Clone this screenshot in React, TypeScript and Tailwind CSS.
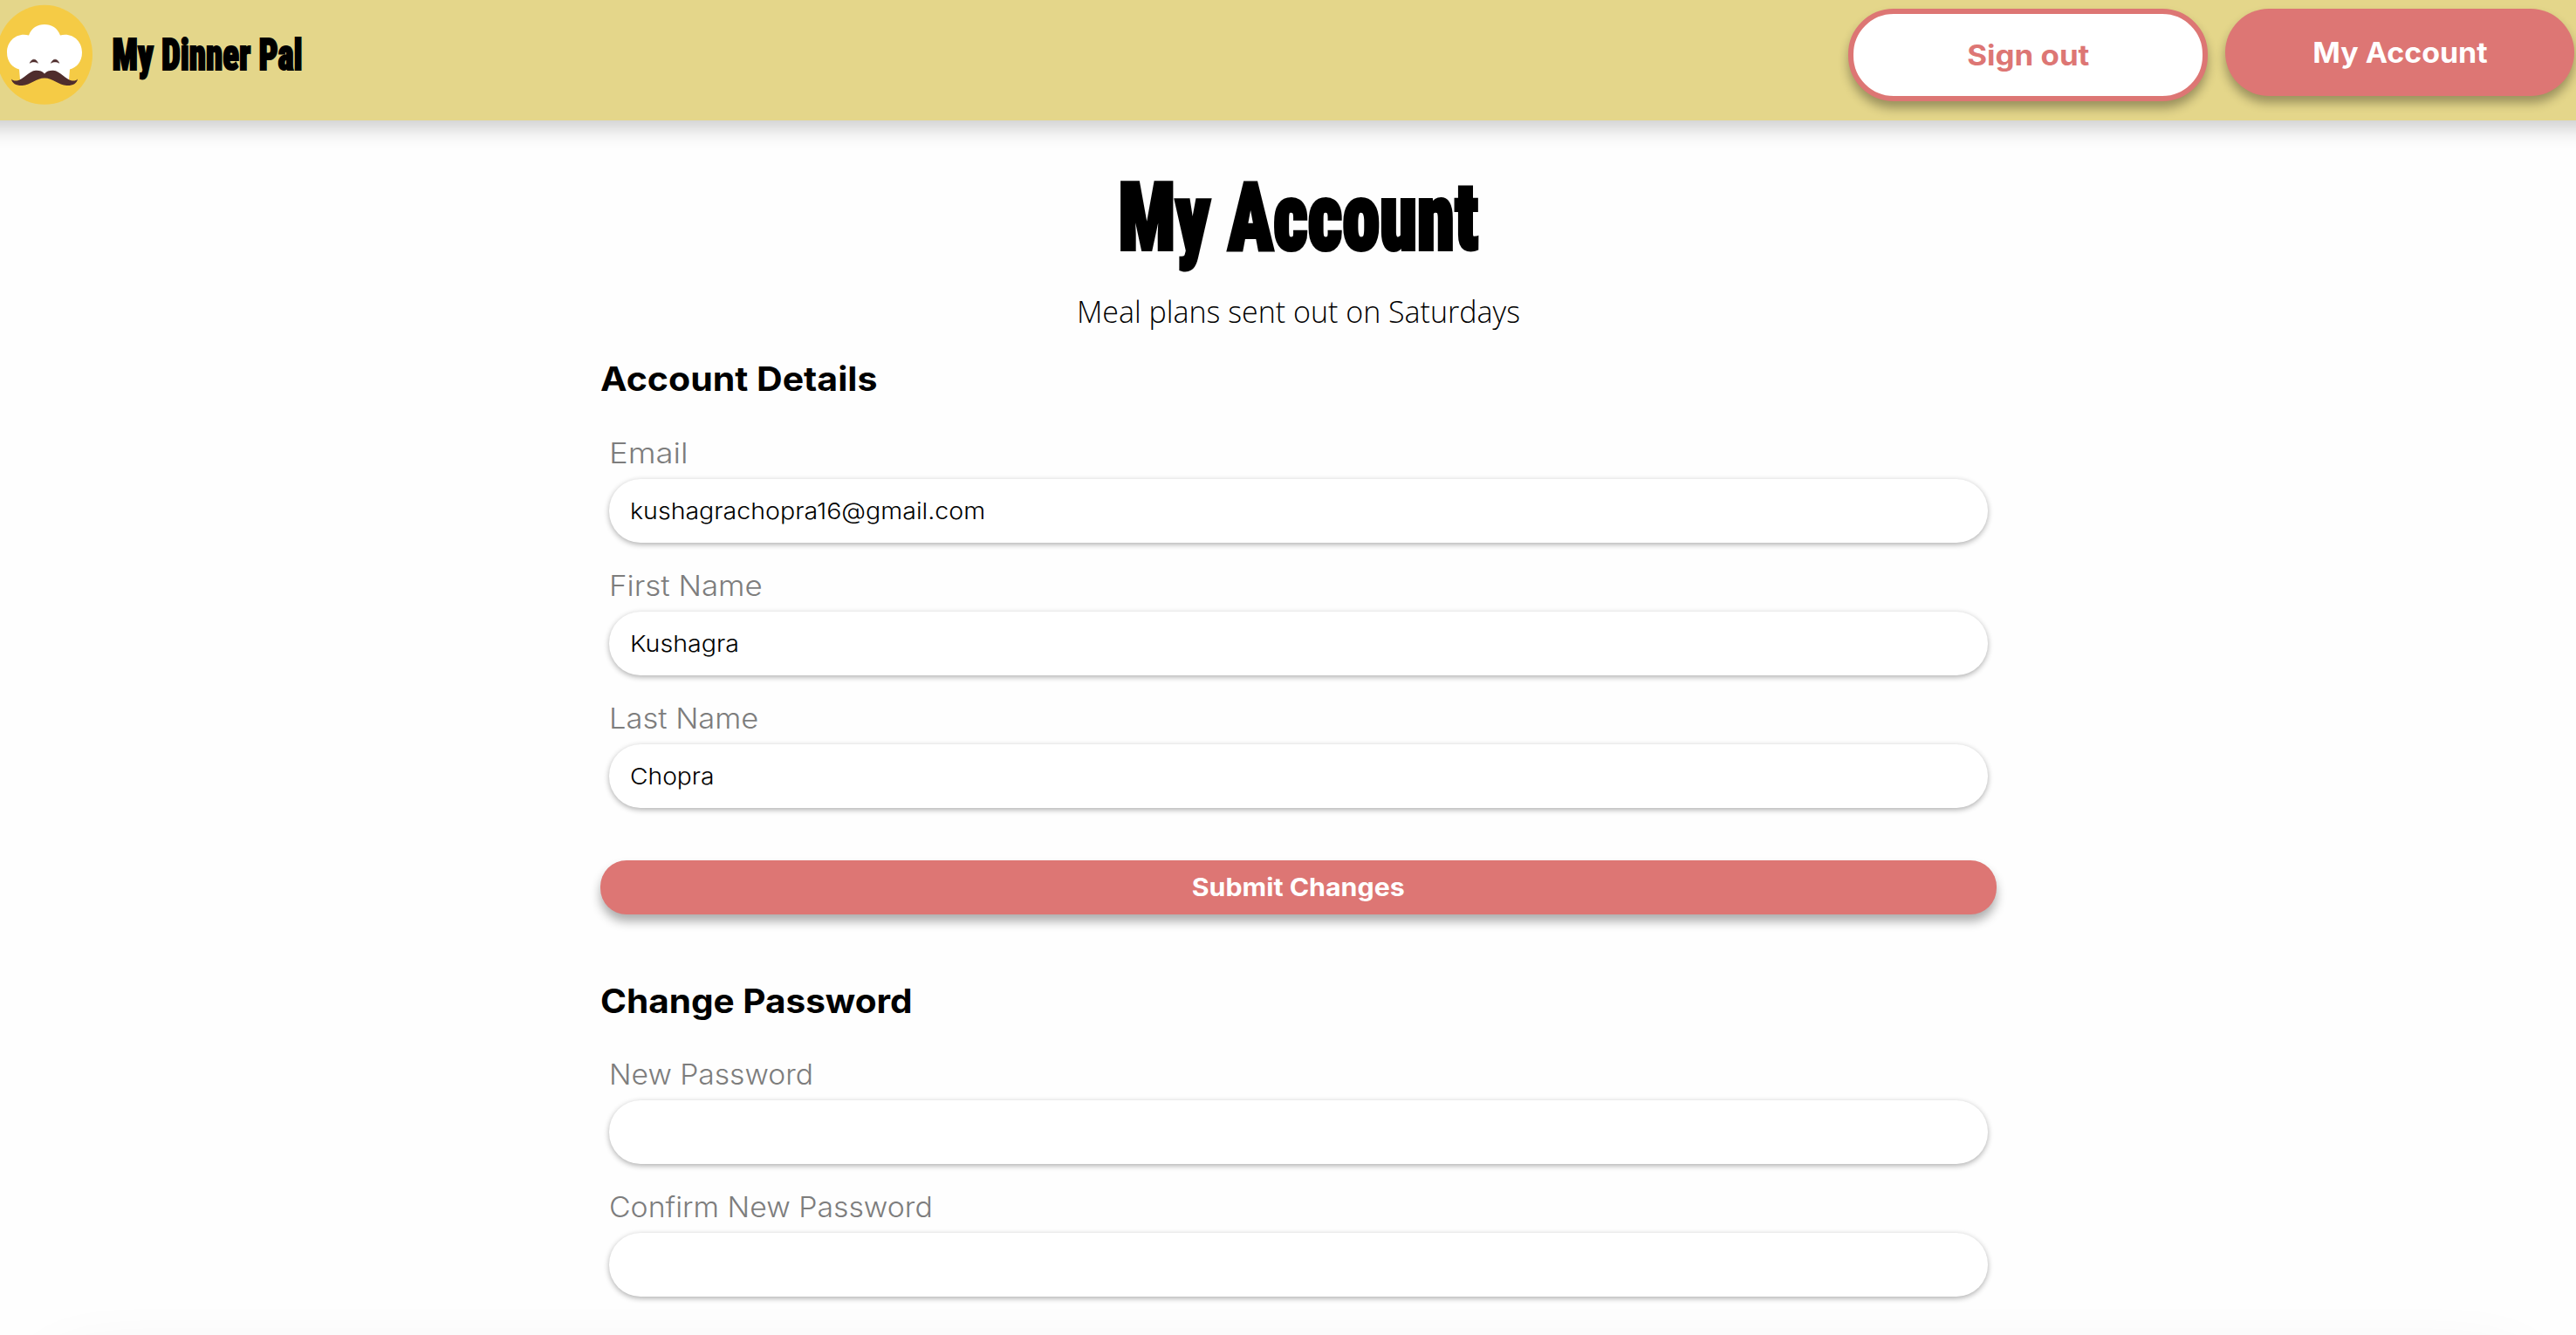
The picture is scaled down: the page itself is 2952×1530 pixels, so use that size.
import React from "react";

function ChefLogo() {
  return (
    <svg viewBox="0 0 110 130" className="h-[130px] w-[110px] shrink-0" aria-label="Chef logo">
      <ellipse cx="51" cy="62.8" rx="55" ry="57" fill="#f5cb45" />
      <path
        d="M33 40.5C36 32 43 28 51 28C59 28 66 32 69 40.5C83 37 94 47 94 60C94 71 88 77 80 79.5L79 91.5L51 89L23 91.5L22 79.5C14 77 8 71 8 60C8 47 19 37 33 40.5Z"
        fill="#fff"
      />
      <path
        d="M34.2 72.3C35.5 69.3 37 68.2 38.8 68.2C40.8 68.2 42.3 69.3 43.4 72.3C42 71.3 40.5 70.9 38.8 70.9C37 70.9 35.5 71.3 34.2 72.3ZM58.5 72.3C59.8 69.3 61.3 68.2 63.1 68.2C65.1 68.2 66.6 69.3 67.7 72.3C66.3 71.3 64.8 70.9 63.1 70.9C61.3 70.9 59.8 71.3 58.5 72.3Z"
        fill="#4f2d2d"
        stroke="#4f2d2d"
        strokeWidth="0.6"
      />
      <path
        d="M51 84.5C48.5 81.5 45 80.6 41 80.8C33 81.3 26.500 91.500 19.500 92.500C16.500 92.900 14.500 92.200 13 90.500C13.700 95.800 19 98.300 25.500 98C35 97.500 42 89.500 51 89.600C60 89.500 67 97.500 76.500 98C83 98.300 88.300 95.800 89 90.500C87.500 92.200 85.500 92.900 82.500 92.500C75.500 91.500 69 81.300 61 80.800C57 80.600 53.500 81.500 51 84.500Z"
        fill="#4f2d2d"
      />
    </svg>
  );
}

type FieldProps = { label: string; labelScale: string; value?: string; valueScale?: string };

function Field({ label, labelScale, value = "", valueScale = "" }: FieldProps) {
  return (
    <div>
      <label className="block pl-[10px] text-[32px] font-light leading-[40px] text-[#7d7d7d]">
        <span className={`inline-block origin-left ${labelScale}`}>{label}</span>
      </label>
      <div className="mx-[10px] mt-[9px] flex h-[73px] items-center rounded-[36px] bg-white pl-[24px] text-[26px] font-light shadow-[0_2px_6px_rgba(0,0,0,0.32)]">
        <span className={`origin-left ${valueScale}`}>{value}</span>
      </div>
    </div>
  );
}

export default function App() {
  return (
    <div className="h-screen overflow-hidden bg-[#fefefe] font-['Inter',sans-serif] text-black">
      <header className="-mx-10 flex h-[138px] items-start justify-between bg-[#e4d68a] px-10 shadow-[0_0_22px_9px_rgba(0,0,0,0.2)]">
        <div className="flex items-start">
          <ChefLogo />
          <span className="origin-left scale-x-[0.776] pl-[24px] pt-[33px] font-['Roboto',sans-serif] text-[50px] font-black leading-[60px] [font-stretch:75%] [-webkit-text-stroke:2px_#000]">
            My Dinner Pal
          </span>
        </div>
        <div className="flex items-start gap-[20px] pr-[2px] pt-[10px] text-[32px] font-bold">
          <button className="flex h-[106px] w-[412px] items-center justify-center rounded-[52px] border-[6px] border-[#dd7674] bg-white pt-px text-[#dd7674] shadow-[0_8px_12px_rgba(0,0,0,0.32)]">
            <span className="scale-x-[1.09]">Sign out</span>
          </button>
          <button className="flex h-[100px] w-[400px] items-center justify-center rounded-[50px] bg-[#dd7674] pt-px text-white shadow-[0_8px_12px_rgba(0,0,0,0.32)]">
            <span className="scale-x-[1.06]">My Account</span>
          </button>
        </div>
      </header>

      <main className="ml-[688px] w-[1600px] pt-[45px]">
        <h1 className="flex justify-center font-['Roboto',sans-serif] text-[108px] font-black leading-[132px] [font-stretch:75%] [-webkit-text-stroke:4px_#000]">
          <span className="scale-x-[0.8]">My Account</span>
        </h1>
        <p className="mt-[19px] text-center font-['Open_Sans',sans-serif] text-[34px] font-light leading-[46px]">
          Meal plans sent out on Saturdays
        </p>

        <section className="mt-[30px]">
          <h2 className="mb-[42px] text-[38px] font-bold leading-[48px]">
            <span className="inline-block origin-left scale-x-[1.08]">Account Details</span>
          </h2>
          <div className="flex flex-col gap-[30px]">
            <Field label="Email" labelScale="scale-x-[1.14]" value="kushagrachopra16@gmail.com" valueScale="scale-x-[1.098]" />
            <Field label="First Name" labelScale="scale-x-[1.09]" value="Kushagra" valueScale="scale-x-[1.1]" />
            <Field label="Last Name" labelScale="scale-x-[1.077]" value="Chopra" valueScale="scale-x-[1.085]" />
          </div>
          <button className="mt-[60px] flex h-[62px] w-full items-center justify-center rounded-[30px] bg-[#dd7674] text-[28px] font-bold text-white shadow-[0_8px_12px_rgba(0,0,0,0.32)]">
            <span className="scale-x-[1.083]">Submit Changes</span>
          </button>
        </section>

        <section className="mt-[75px]">
          <h2 className="mb-[41px] text-[38px] font-bold leading-[48px]">
            <span className="inline-block origin-left scale-x-[1.066]">Change Password</span>
          </h2>
          <div className="flex flex-col gap-[30px]">
            <Field label="New Password" labelScale="scale-x-[1.05]" />
            <Field label="Confirm New Password" labelScale="scale-x-[1.056]" />
          </div>
        </section>
      </main>

      <footer className="mx-[70px] mt-[94px] h-[200px] shadow-[0_0_90px_rgba(0,0,0,0.12)]" />
    </div>
  );
}
